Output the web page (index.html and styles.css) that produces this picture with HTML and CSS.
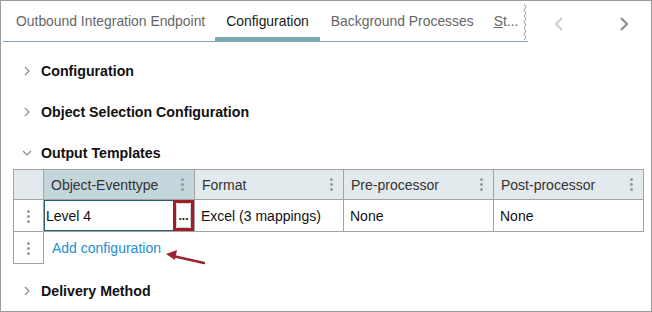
FILE: index.html
```html
<!DOCTYPE html>
<html lang="en">
<head>
  <meta charset="UTF-8">
  <title>Outbound Integration Endpoint - Configuration</title>
  <link rel="stylesheet" href="styles.css">
</head>
<body>
  <div class="frame">
    <!-- tabs -->
    <div class="tabbar">
      <div class="tabs">
        <span class="tab">Outbound Integration Endpoint</span>
        <span class="tab active">Configuration</span>
        <span class="tab">Background Processes</span>
        <span class="tab last"><u>S</u>t...</span>
        <svg class="zigzag" width="6" height="36" viewBox="0 0 6 36">
          <polyline points="2,0 4,3 2,6 4,9 2,12 4,15 2,18 4,21 2,24 4,27 2,30 4,33 2,36" fill="none" stroke="#9a9a9a" stroke-width="1"/>
        </svg>
      </div>
      <div class="tab-nav">
        <svg width="10" height="16" viewBox="0 0 10 16"><polyline points="8,2 2,8 8,14" fill="none" stroke="#cfcfcf" stroke-width="2"/></svg>
        <svg width="10" height="16" viewBox="0 0 10 16"><polyline points="2,2 8,8 2,14" fill="none" stroke="#8a8a8a" stroke-width="2"/></svg>
      </div>
    </div>

    <div class="content">
      <div class="section-head">
        <svg class="chev" width="10" height="10" viewBox="0 0 10 10"><polyline points="3,1 7,5 3,9" fill="none" stroke="#8c8c8c" stroke-width="1.2"/></svg>
        Configuration
      </div>
      <div class="section-head">
        <svg class="chev" width="10" height="10" viewBox="0 0 10 10"><polyline points="3,1 7,5 3,9" fill="none" stroke="#8c8c8c" stroke-width="1.2"/></svg>
        Object Selection Configuration
      </div>
      <div class="section-head">
        <svg class="chev" width="10" height="10" viewBox="0 0 10 10"><polyline points="1,3 5,7 9,3" fill="none" stroke="#8c8c8c" stroke-width="1.2"/></svg>
        Output Templates
      </div>

      <!-- output templates grid -->
      <div class="grid-wrap">
        <table class="grid">
          <colgroup>
            <col style="width:30px">
            <col style="width:151px">
            <col style="width:149px">
            <col style="width:150px">
            <col style="width:150px">
          </colgroup>
          <tr class="head">
            <th class="handle"></th>
            <th class="sel"><div class="th-in">Object-Eventtype<span class="dots"><i></i><i></i><i></i></span></div></th>
            <th><div class="th-in">Format<span class="dots"><i></i><i></i><i></i></span></div></th>
            <th><div class="th-in">Pre-processor<span class="dots"><i></i><i></i><i></i></span></div></th>
            <th><div class="th-in">Post-processor<span class="dots"><i></i><i></i><i></i></span></div></th>
          </tr>
          <tr class="row">
            <td class="handle"><span class="dots"><i></i><i></i><i></i></span></td>
            <td class="edit">
              <div class="edit-in">
                <span class="val">Level 4</span>
                <span class="pick"><span class="pick-btn">...</span></span>
              </div>
            </td>
            <td>Excel (3 mappings)</td>
            <td>None</td>
            <td>None</td>
          </tr>
          <tr class="add">
            <td class="handle"><span class="dots"><i></i><i></i><i></i></span></td>
            <td class="link-cell" colspan="4"><a href="#">Add configuration</a></td>
          </tr>
        </table>
        <svg class="arrow" width="46" height="20" viewBox="0 0 46 20">
          <line x1="40" y1="15" x2="9" y2="8" stroke="#9b2433" stroke-width="2.4" stroke-linecap="round"/>
          <polygon points="2,6 13,2 11,12" fill="#9b2433"/>
        </svg>
      </div>

      <div class="section-head delivery">
        <svg class="chev" width="10" height="10" viewBox="0 0 10 10"><polyline points="3,1 7,5 3,9" fill="none" stroke="#8c8c8c" stroke-width="1.2"/></svg>
        Delivery Method
      </div>
    </div>
  </div>
</body>
</html>
```

FILE: styles.css
```css
* {
  margin: 0;
  padding: 0;
  box-sizing: border-box;
}
body {
  font-family: 'Liberation Sans', Arial, sans-serif;
  font-size: 13px;
  color: #222;
  background: #fff;
}

.frame {
  width: 652px;
  height: 312px;
  border: 1px solid #9c9c9c;
  overflow: hidden;
}

/* tabs */
.tabbar {
  display: flex;
  height: 41px;
}
.tabs {
  display: flex;
  align-items: center;
  flex: 0 0 525px;
  margin-left: 2px;
  border-bottom: 1px solid #7ea7b0;
  overflow: hidden;
}
.tab {
  flex-shrink: 0;
  white-space: nowrap;
  font-size: 13.9px;
  color: #666;
  padding: 0 11px;
  height: 100%;
  display: flex;
  align-items: center;
  border-bottom: 4px solid transparent;
  padding-top: 4px;
}
.tab:first-child {
  padding-left: 13px;
  padding-right: 10px;
}
.tab.last {
  padding: 4px 0 0 9px;
}
.tab.active {
  color: #1a1a1a;
  border-bottom-color: #7fa9b1;
}
.tab u {
  text-decoration: underline;
}
.zigzag {
  flex-shrink: 0;
  margin-left: auto;
  margin-top: 2px;
}
.tab-nav {
  flex: 1;
  display: flex;
  align-items: center;
  justify-content: space-between;
  padding: 4px 22px 0 26px;
}

/* sections */
.content {
  padding: 15px 0 0 12px;
}
.section-head {
  display: flex;
  align-items: center;
  height: 28px;
  font-weight: bold;
  font-size: 14.2px;
  color: #111;
  margin-bottom: 13px;
}
.section-head .chev {
  margin: 0 9px 0 9px;
}
.section-head:nth-child(3) {
  margin-bottom: 2px;
}
.section-head.delivery {
  margin-top: 13px;
}

/* grid */
.grid-wrap {
  position: relative;
}
.grid {
  border-collapse: collapse;
  table-layout: fixed;
  width: 630px;
  font-size: 14px;
}
.grid th,
.grid td {
  border: 1px solid #a3a3a3;
  text-align: left;
  font-weight: normal;
  white-space: nowrap;
}
.grid .head th {
  background: #e2eaed;
  height: 30px;
  color: #333;
  padding: 0 10px 0 7px;
}
.grid .head th.sel {
  background: #c3d6db;
}
.th-in {
  display: flex;
  align-items: center;
  justify-content: space-between;
}
.dots {
  display: inline-flex;
  flex-direction: column;
  gap: 2px;
}
.dots i {
  display: block;
  width: 3px;
  height: 3px;
  border-radius: 50%;
  background: #9a9a9a;
}
.grid .row td {
  height: 32px;
  padding: 0 6px;
  color: #111;
}
.grid td.handle {
  text-align: center;
  padding: 0;
}
.grid td.handle .dots {
  vertical-align: middle;
}
.grid td.edit {
  padding: 0;
}
.edit-in {
  display: flex;
  align-items: stretch;
  height: 31px;
  border: 1px solid #25606b;
  border-right: none;
}
.edit-in .val {
  flex: 1;
  display: flex;
  align-items: center;
  padding-left: 1px;
}
.pick {
  width: 21px;
  border: 3px solid #a11d2b;
  margin: -1px 0 -1px 0;
  display: flex;
  background: #fff;
}
.pick-btn {
  flex: 1;
  border: 1px solid #d4d4d4;
  border-radius: 2px;
  font-weight: bold;
  font-size: 12px;
  line-height: 18px;
  text-align: center;
  padding-top: 3px;
}
.grid .add td {
  height: 32px;
}
.grid .add td.link-cell {
  border: none;
  border-top: 1px solid #a3a3a3;
  padding-left: 8px;
}
.link-cell a {
  color: #1d8fd1;
  text-decoration: none;
}
.arrow {
  position: absolute;
  left: 151px;
  top: 79px;
}
```
